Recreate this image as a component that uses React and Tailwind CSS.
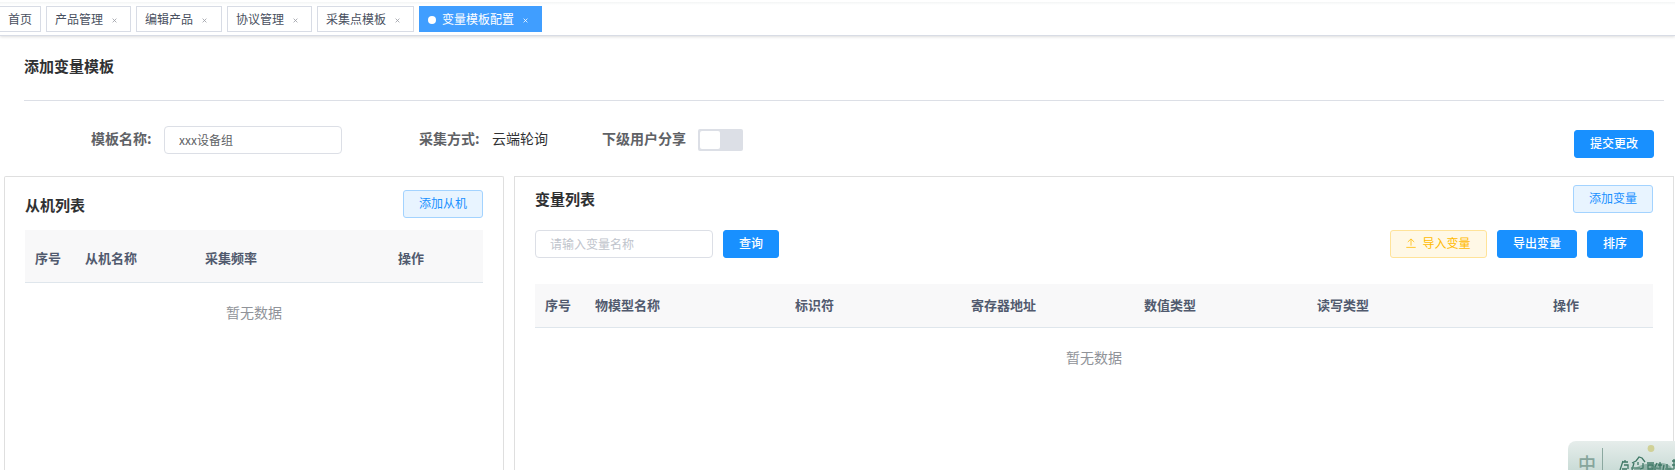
import React from "react";

const tabs = [
  { label: "产品管理", width: "w-[85px]" },
  { label: "编辑产品", width: "w-[86px]" },
  { label: "协议管理", width: "w-[85px]" },
  { label: "采集点模板", width: "w-[97px]" },
];

function CloseIcon({ className }) {
  return (
    <svg viewBox="0 0 5 5" className={`h-[5px] w-[5px] ${className}`} fill="none" stroke="currentColor" strokeWidth="0.8">
      <path d="M0.6 0.6L4.4 4.4M4.4 0.6L0.6 4.4" />
    </svg>
  );
}

function TabBar() {
  return (
    <nav className="flex h-9 shrink-0 gap-[5px] border-b border-[#d8dce5] pt-[6px] text-[12px] leading-6 text-[#495060] shadow-[0_1px_3px_0_rgba(0,0,0,.12),0_0_3px_0_rgba(0,0,0,.04)] bg-[linear-gradient(#fff_2px,#f3f5f5_2px,#fff_5px)]">
      <div className="h-[26px] w-[41px] border border-l-0 border-[#d8dce5] bg-white pl-2">首页</div>
      {tabs.map((t) => (
        <div key={t.label} className={`flex h-[26px] items-center border border-[#d8dce5] bg-white pl-2 ${t.width}`}>
          <span>{t.label}</span>
          <CloseIcon className="mt-[3px] ml-[9px] text-[#999ca3]" />
        </div>
      ))}
      <div className="flex h-[26px] w-[123px] items-center bg-[#409eff] pl-[9px] text-white">
        <i className="mt-[2px] mr-[6px] h-2 w-2 rounded-full bg-white" />
        <span>变量模板配置</span>
        <CloseIcon className="mt-[3px] ml-[9px]" />
      </div>
    </nav>
  );
}

const kinds = {
  primary: "border-[#1890ff] bg-[#1890ff] text-white font-medium",
  plain: "border-[#a3d3ff] bg-[#e8f4ff] text-[#1890ff]",
  warning: "border-[#ffe399] bg-[#fff8e6] text-[#ffba00]",
};

function Button({ kind = "primary", className, children }) {
  return (
    <button className={`flex h-7 shrink-0 items-center justify-center rounded-[3px] border pb-[2px] text-[12px] leading-none ${kinds[kind]} ${className}`}>
      {children}
    </button>
  );
}

function Form() {
  return (
    <div className="flex h-[75px] items-start pl-[91px] text-[14px] leading-[26px] text-[#606266]">
      <span className="mt-6 w-[73px] font-bold">模板名称:</span>
      <input
        className="mt-[25px] h-7 w-[178px] rounded-[4px] border border-[#dcdfe6] px-[14px] pb-[2px] text-[12px] outline-none"
        defaultValue="xxx设备组"
      />
      <span className="mt-6 ml-[77px] w-[73px] font-bold">采集方式:</span>
      <span className="mt-6 w-[110px] text-[#303133]">云端轮询</span>
      <span className="mt-6 w-24 font-bold">下级用户分享</span>
      <span className="mt-[28px] flex h-[22px] w-[45px] rounded-[2px] bg-[#dcdfe6] p-[2px]">
        <i className="h-[18px] w-5 rounded-[2px] bg-white" />
      </span>
      <Button className="mt-[29px] mr-[21px] ml-auto w-20">提交更改</Button>
    </div>
  );
}

function Table({ columns, rowHeight }) {
  return (
    <div>
      <div className={`flex items-center border-b border-[#dfe6ec] bg-[#f8f8f9] pl-[10px] text-[13px] font-bold text-[#515a6e] ${rowHeight}`}>
        {columns.map(([label, width]) => (
          <div key={label} className={`shrink-0 ${width}`}>{label}</div>
        ))}
      </div>
      <div className="flex h-[58px] items-center justify-center text-[14px] text-[#909399]">暂无数据</div>
    </div>
  );
}

const slaveColumns = [
  ["序号", "w-[50px]"],
  ["从机名称", "w-[120px]"],
  ["采集频率", "w-[193px]"],
  ["操作", "w-[80px]"],
];

const variableColumns = [
  ["序号", "w-[50px]"],
  ["物模型名称", "w-[200px]"],
  ["标识符", "w-[176px]"],
  ["寄存器地址", "w-[173px]"],
  ["数值类型", "w-[173px]"],
  ["读写类型", "w-[236px]"],
  ["操作", "w-[80px]"],
];

function SlavePanel() {
  return (
    <section className="w-[500px] shrink-0 rounded-t-[2px] border border-b-0 border-[#dfdfdf] px-5">
      <div className="flex h-[53px] items-start justify-between pt-[13px]">
        <h2 className="mt-[3px] text-[15px] leading-6 font-bold text-[#303133]">从机列表</h2>
        <Button kind="plain" className="w-20">添加从机</Button>
      </div>
      <Table columns={slaveColumns} rowHeight="h-[53px] pt-[3px]" />
    </section>
  );
}

function VariablePanel() {
  return (
    <section className="w-[1160px] shrink-0 border border-b-0 border-[#dfdfdf] px-5">
      <div className="flex h-[53px] items-start justify-between pt-2">
        <h2 className="mt-[2px] text-[15px] leading-6 font-bold text-[#303133]">变量列表</h2>
        <Button kind="plain" className="w-20">添加变量</Button>
      </div>
      <div className="flex h-[54px] items-start gap-[10px]">
        <input
          className="h-7 w-[178px] rounded-[4px] border border-[#dcdfe6] px-[14px] pb-[2px] text-[12px] outline-none placeholder:text-[#c0c4cc]"
          placeholder="请输入变量名称"
        />
        <Button className="w-14">查询</Button>
        <Button kind="warning" className="ml-auto w-[97px] gap-[6px]">
          <svg viewBox="0 0 10 10" className="h-[10px] w-[10px]" fill="none" stroke="currentColor" strokeWidth="0.8">
            <path d="M5 7.6V1M1.8 4L5 0.9L8.2 4M0.3 9.4H9.7" />
          </svg>
          导入变量
        </Button>
        <Button className="w-20">导出变量</Button>
        <Button className="mr-[10px] w-14">排序</Button>
      </div>
      <Table columns={variableColumns} rowHeight="h-[44px] pb-[2px]" />
    </section>
  );
}

function InputMethodBadge() {
  return (
    <div className="absolute top-[441px] left-[1568px] flex h-[29px] w-[107px] overflow-hidden rounded-tl-[8px] bg-linear-to-b from-[#e6edeb] to-[#cadcd7]">
      <span className="mt-[12px] ml-[10px] h-4 w-[18px] text-[18px] leading-[20px] font-medium text-[#86a59c]">中</span>
      <i className="mt-[7px] ml-[6px] h-[22px] w-px bg-[#8ba8a0]" />
      <svg viewBox="0 0 72 29" className="h-[29px] w-[72px]" fill="none" stroke="#3f7866" strokeWidth="1.3">
        <circle cx="48" cy="7.5" r="3.4" fill="#d0d197" stroke="none" />
        <path d="M31 28Q39 22 51 23Q63 20 69 27L69 29H31Z" fill="#8fb1a6" stroke="none" />
        <path d="M20 20L17 29M19 21H25M21 24H25V28M22 19V21M19 28H24M29 22L33 20L36 16L39 17L42 21M31 22L29 29M35 21V24M40 22V27L37 28M45 24H50V28H45ZM44 22H51M54 22L52 26V29M55 24H59M57 21V28M61 24L60 29M64 23V28H68M69 20H72M69 24H72M71 18V28" />
        <path d="M28 27H37M48 26L58 28M62 28H71" stroke="#5d8e7e" strokeWidth="1.5" />
      </svg>
    </div>
  );
}

export default function App() {
  return (
    <main className="relative flex h-[470px] w-[1675px] flex-col overflow-hidden bg-white font-['Noto_Sans_CJK_SC',sans-serif]">
      <TabBar />
      <header className="mr-[11px] ml-6 h-[65px] shrink-0 border-b border-[#dcdfe6] pt-[18px]">
        <h1 className="text-[15px] leading-6 font-bold text-[#303133]">添加变量模板</h1>
      </header>
      <Form />
      <div className="flex min-h-0 flex-1 gap-[10px] pl-1">
        <SlavePanel />
        <VariablePanel />
      </div>
      <InputMethodBadge />
    </main>
  );
}
